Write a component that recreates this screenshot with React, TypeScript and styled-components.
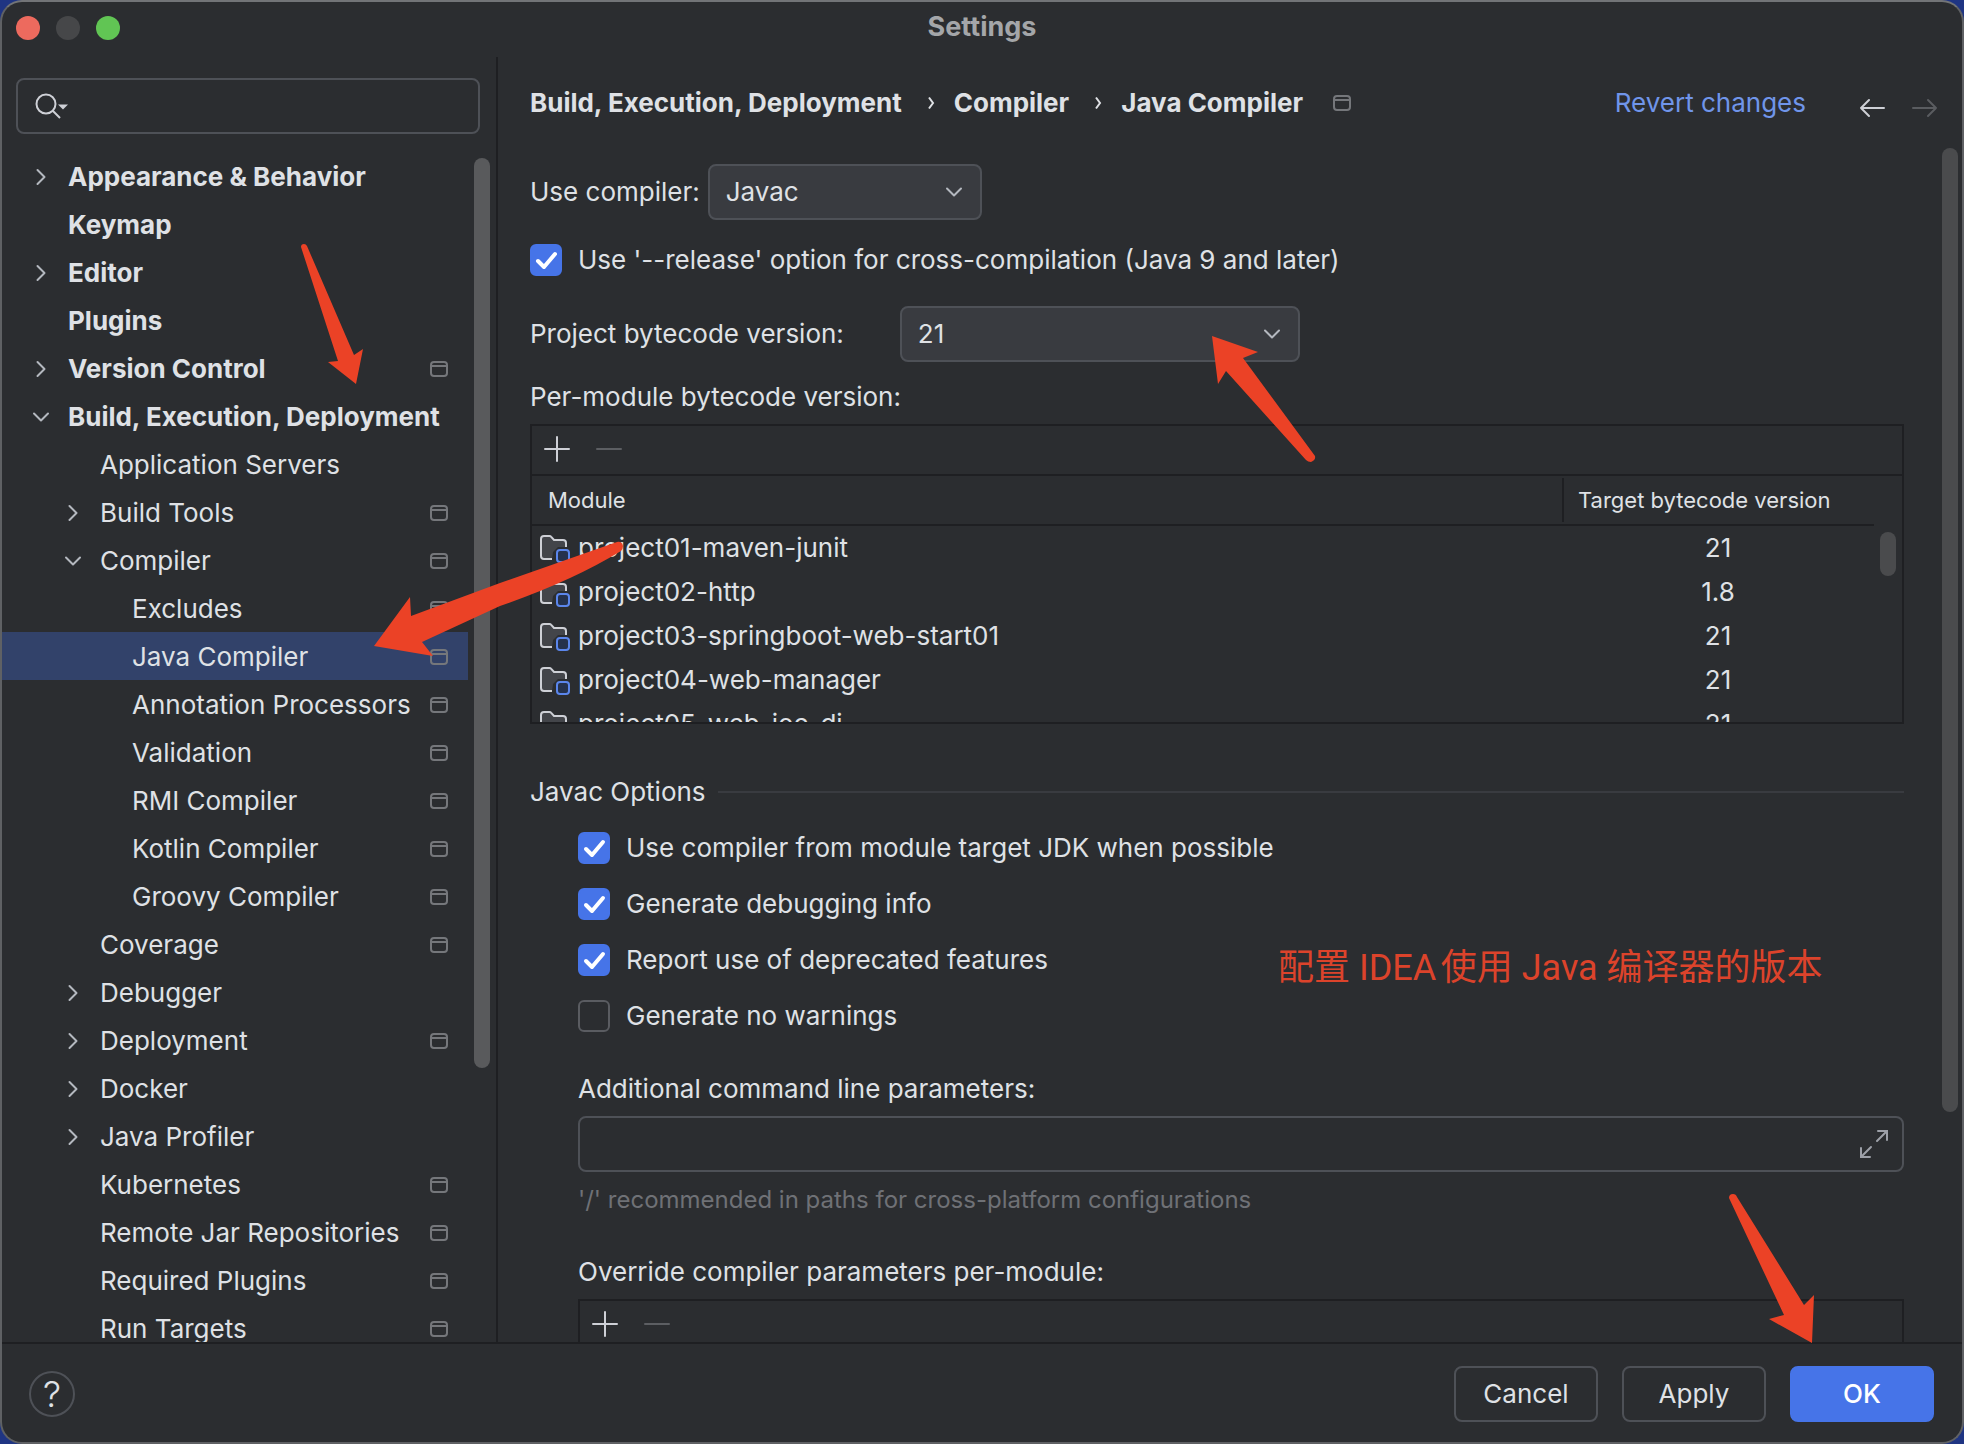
import React, { useState } from "react";
import styled, { createGlobalStyle, css } from "styled-components";

const c = {
  bg: "#2b2d30",
  line: "#1e1f22",
  border: "#4e5157",
  field: "#393b40",
  text: "#dfe1e5",
  muted: "#6f7176",
  accent: "#4674e8",
  selection: "#32426a",
  red: "#eb4226",
};

const GlobalStyle = createGlobalStyle`
  * { box-sizing: border-box; }
  html, body, #root { height: 100%; }
  body {
    margin: 0;
    background: #1f3583;
    color: ${c.text};
    font: 400 26px/32px Inter, "Noto Sans CJK SC", sans-serif;
  }
  button, input, select { font: inherit; color: inherit; }
`;

const Window = styled.div`
  position: relative;
  display: flex;
  flex-direction: column;
  height: 100vh;
  overflow: hidden;
  background: ${c.bg};
  border: 2px solid #5f6164;
  border-top-color: #727477;
  border-radius: 22px;
`;

const TitleBar = styled.header`
  display: grid;
  grid-template-columns: 1fr auto 1fr;
  align-items: center;
  flex: none;
  height: 55px;
  padding: 0 14px 4px;
`;

const Lights = styled.div`
  display: flex;
  gap: 16px;
`;

const Light = styled.button<{ $color: string }>`
  width: 24px;
  height: 24px;
  padding: 0;
  border: 0;
  border-radius: 50%;
  background: ${(p) => p.$color};
`;

const Title = styled.h1`
  margin: 0;
  padding-bottom: 2px;
  font-size: 27px;
  font-weight: 700;
  color: #a4a6a9;
`;

const Body = styled.div`
  display: flex;
  flex: 1;
  min-height: 0;
`;

const Sidebar = styled.nav`
  display: flex;
  flex-direction: column;
  flex: none;
  width: 496px;
  border-right: 2px solid ${c.line};
`;

const Search = styled.label`
  display: flex;
  align-items: center;
  flex: none;
  height: 56px;
  margin: 21px 16px 16px 14px;
  padding: 0 16px;
  border: 2px solid ${c.border};
  border-radius: 8px;
`;

const BareInput = styled.input`
  flex: 1;
  min-width: 0;
  padding: 0;
  border: 0;
  outline: 0;
  background: none;
`;

const TreeArea = styled.div`
  display: flex;
  flex: 1;
  min-height: 0;
  gap: 6px;
`;

const Tree = styled.ul`
  flex: 1;
  min-width: 0;
  margin: 0;
  padding: 2px 0 0;
  overflow: hidden;
  list-style: none;
`;

const TreeRow = styled.li<{ $level: number; $selected?: boolean }>`
  display: flex;
  align-items: center;
  height: 48px;
  padding: 2px 20px 0 ${(p) => 29 + p.$level * 32}px;
  background: ${(p) => (p.$selected ? c.selection : "none")};
  font-weight: ${(p) => (p.$level === 0 ? 700 : 400)};
  white-space: nowrap;
`;

const Twisty = styled.span`
  display: flex;
  flex: none;
  width: 37px;
`;

const TreeLabel = styled.span`
  flex: 1;
`;

const Thumb = styled.div<{ $dim?: boolean; $height: string }>`
  flex: none;
  width: 16px;
  height: ${(p) => p.$height};
  border-radius: 8px;
  background: ${(p) => (p.$dim ? "#4a4b4d" : "#595a5c")};
`;

const SidebarRail = styled.div`
  flex: none;
  width: 22px;
  padding-top: 8px;
`;

const Main = styled.main`
  display: flex;
  flex-direction: column;
  flex: 1;
  min-width: 0;
`;

const Heading = styled.div`
  display: flex;
  align-items: center;
  flex: none;
  height: 91px;
  padding: 0 22px 0 32px;
`;

const Crumbs = styled.ol`
  display: flex;
  align-items: center;
  flex: 1;
  gap: 16px;
  margin: 0;
  padding: 0;
  list-style: none;
  font-weight: 700;
`;

const Crumb = styled.li`
  display: flex;
  align-items: center;
  gap: 20px;
`;

const CrumbScope = styled.li`
  display: flex;
  padding-left: 14px;
`;

const Link = styled.a`
  color: #7095ea;
  text-decoration: none;
`;

const NavButtons = styled.div`
  display: flex;
  gap: 20px;
  padding: 10px 0 0 50px;
`;

const IconButton = styled.button`
  display: flex;
  padding: 0;
  border: 0;
  background: none;
`;

const Scroller = styled.div`
  display: flex;
  flex: 1;
  min-height: 0;
`;

const Content = styled.div`
  flex: 1;
  min-width: 0;
  padding: 16px 38px 0 32px;
  overflow: hidden;
`;

const Field = styled.div<{ $gap: number }>`
  display: flex;
  align-items: center;
  gap: ${(p) => p.$gap}px;
`;

const SelectBox = styled.div<{ $width: number }>`
  display: grid;
  width: ${(p) => p.$width}px;
  height: 56px;
  align-items: center;
  > * { grid-area: 1 / 1; }
  > svg { justify-self: end; margin-right: 18px; pointer-events: none; }
`;

const Select = styled.select`
  appearance: none;
  width: 100%;
  height: 100%;
  padding: 0 16px;
  border: 2px solid ${c.border};
  border-radius: 8px;
  background: ${c.field};
`;

const CheckRow = styled.label`
  display: flex;
  align-items: center;
  gap: 16px;
  height: 56px;
`;

const CheckBox = styled.span`
  display: grid;
  width: 32px;
  height: 32px;
  > * { grid-area: 1 / 1; }
  > svg { pointer-events: none; }
`;

const CheckInput = styled.input`
  appearance: none;
  width: 32px;
  height: 32px;
  margin: 0;
  border: 2px solid #5a5c61;
  border-radius: 6px;
  &:checked { border-color: ${c.accent}; background: ${c.accent}; }
`;

const ReleaseRow = styled.div`
  padding: 12px 0 18px;
`;

const Caption = styled.div<{ $top: number }>`
  display: block;
  padding: ${(p) => p.$top}px 0 11px;
`;

const Panel = styled.section`
  display: flex;
  flex-direction: column;
  height: 300px;
  border: 2px solid ${c.line};
`;

const Toolbar = styled.div`
  display: flex;
  align-items: center;
  flex: none;
  gap: 26px;
  height: 48px;
  padding: 0 0 2px 12px;
`;

const TableArea = styled.div`
  display: flex;
  flex: 1;
  min-height: 0;
  border-top: 2px solid ${c.line};
  overflow: hidden;
`;

const TableClip = styled.div`
  flex: 1;
  min-width: 0;
`;

const Table = styled.table`
  width: 100%;
  border-collapse: separate;
  border-spacing: 0;
  table-layout: fixed;
`;

const Th = styled.th<{ $width?: number }>`
  width: ${(p) => (p.$width ? `${p.$width}px` : "auto")};
  height: 50px;
  padding: 0;
  border-bottom: 2px solid ${c.line};
  font-size: 22px;
  font-weight: 400;
  text-align: left;
`;

const ThInner = styled.div<{ $divided?: boolean }>`
  display: flex;
  align-items: center;
  height: 44px;
  padding-left: ${(p) => (p.$divided ? 14 : 16)}px;
  ${(p) => p.$divided && css`border-left: 2px solid ${c.line};`}
`;

const Td = styled.td<{ $center?: boolean }>`
  height: 44px;
  padding: 0 0 0 ${(p) => (p.$center ? 0 : 6)}px;
  text-align: ${(p) => (p.$center ? "center" : "left")};
`;

const ModuleCell = styled.div`
  display: flex;
  align-items: center;
  gap: 8px;
`;

const TableRail = styled.div`
  flex: none;
  width: 28px;
  padding: 56px 0 0 6px;
`;

const GroupTitle = styled.div`
  display: flex;
  align-items: center;
  gap: 12px;
  padding: 52px 0 12px;
  &::after {
    content: "";
    flex: 1;
    height: 2px;
    background: ${c.field};
  }
`;

const Group = styled.div`
  padding-left: 48px;
`;

const ExpandField = styled.div`
  display: flex;
  align-items: center;
  height: 56px;
  padding: 0 12px 0 16px;
  border: 2px solid ${c.border};
  border-radius: 8px;
`;

const Hint = styled.p`
  margin: 12px 0 0;
  color: ${c.muted};
  font-size: 24px;
`;

const MainRail = styled.div`
  flex: none;
  width: 20px;
`;

const Footer = styled.footer`
  display: flex;
  align-items: center;
  flex: none;
  gap: 24px;
  height: 100px;
  padding: 2px 28px 0 27px;
  border-top: 2px solid ${c.line};
`;

const HelpButton = styled.button`
  width: 46px;
  height: 46px;
  margin-right: auto;
  padding: 0;
  border: 2px solid ${c.border};
  border-radius: 50%;
  background: none;
  font-size: 36px;
  font-weight: 300;
`;

const Button = styled.button<{ $primary?: boolean }>`
  width: 144px;
  height: 56px;
  padding: 0;
  border: 2px solid ${(p) => (p.$primary ? c.accent : c.border)};
  border-radius: 8px;
  background: ${(p) => (p.$primary ? c.accent : "none")};
  color: ${(p) => (p.$primary ? "#ffffff" : c.text)};
  font-weight: ${(p) => (p.$primary ? 500 : 400)};
`;

const Markup = styled.svg`
  position: absolute;
  top: -2px;
  left: -2px;
  pointer-events: none;
`;

const Note = styled.p`
  position: absolute;
  top: 940px;
  left: 1276px;
  margin: 0;
  color: #dc432b;
  font: 400 36px/52px Roboto, "Noto Sans CJK SC", sans-serif;
  text-autospace: normal;
  white-space: nowrap;
`;

const Chevron = ({ open }: { open?: boolean }) => (
  <svg width="20" height="20" viewBox="0 0 20 20" fill="none" stroke="#b4b8bf" strokeWidth="2" strokeLinecap="round" strokeLinejoin="round">
    <path d={open ? "M3 6.500l7 7 7-7" : "M6.500 3l7 7-7 7"} />
  </svg>
);

const ScopeIcon = () => (
  <svg width="18" height="16" viewBox="0 0 18 16" fill="none" stroke="#75777b" strokeWidth="2">
    <rect x="1" y="1" width="16" height="14" rx="3" />
    <path d="M1 5h16" />
  </svg>
);

const SearchIcon = () => (
  <svg width="36" height="28" viewBox="0 0 36 28" fill="none" stroke="#ced0d6" strokeWidth="2">
    <circle cx="12" cy="12" r="9.5" />
    <path d="M19 19l7 7" />
    <path d="M24 12.5h10l-5 5z" fill="#ced0d6" stroke="none" />
  </svg>
);

const PlusIcon = () => (
  <svg width="26" height="26" viewBox="0 0 26 26" stroke="#ced0d6" strokeWidth="2" strokeLinecap="round">
    <path d="M13 1v24M1 13h24" />
  </svg>
);

const MinusIcon = () => (
  <svg width="26" height="26" viewBox="0 0 26 26" stroke="#5c5e62" strokeWidth="2" strokeLinecap="round">
    <path d="M1 13h24" />
  </svg>
);

const Arrow = ({ forward }: { forward?: boolean }) => (
  <svg width="32" height="20" viewBox="0 0 32 20" fill="none" stroke={forward ? "#5a5c60" : "#ced0d6"} strokeWidth="2" strokeLinecap="round" strokeLinejoin="round">
    <path d={forward ? "M5 10h23M20 2l8 8-8 8" : "M28 10H5M13 2L5 10l8 8"} />
  </svg>
);

const ModuleIcon = () => (
  <svg width="32" height="32" viewBox="0 0 32 32" fill="none" strokeWidth="2">
    <path d="M14 27H6a3 3 0 0 1-3-3V7a3 3 0 0 1 3-3h5.500a2 2 0 0 1 1.500.700L16 8h9a3 3 0 0 1 3 3v4h-8l-5 5z" fill="#43454a" />
    <path d="M14 27H6a3 3 0 0 1-3-3V7a3 3 0 0 1 3-3h5.500a2 2 0 0 1 1.500.700L16 8h9a3 3 0 0 1 3 3v4" stroke="#ced0d6" />
    <rect x="19" y="18" width="12" height="12" rx="3" fill="#25324d" stroke="#5b86ec" />
  </svg>
);

const ExpandIcon = () => (
  <svg width="32" height="32" viewBox="0 0 32 32" fill="none" stroke="#9da0a8" strokeWidth="2" strokeLinecap="round">
    <path d="M19 13L29 3M20 3h9v9M13 19L3 29M3 20v9h9" />
  </svg>
);

const Check = ({ label, initial }: { label: string; initial: boolean }) => {
  const [on, setOn] = useState(initial);
  return (
    <CheckRow>
      <CheckBox>
        <CheckInput type="checkbox" checked={on} onChange={() => setOn(!on)} />
        {on && (
          <svg width="32" height="32" viewBox="0 0 32 32" fill="none" stroke="#fff" strokeWidth="4" strokeLinecap="round" strokeLinejoin="round">
            <path d="M8 17l6 6L25 10" />
          </svg>
        )}
      </CheckBox>
      {label}
    </CheckRow>
  );
};

type Node = { label: string; level: number; open?: boolean; leaf?: boolean; scope?: boolean; selected?: boolean };

const nodes: Node[] = [
  { label: "Appearance & Behavior", level: 0 },
  { label: "Keymap", level: 0, leaf: true },
  { label: "Editor", level: 0 },
  { label: "Plugins", level: 0, leaf: true },
  { label: "Version Control", level: 0, scope: true },
  { label: "Build, Execution, Deployment", level: 0, open: true },
  { label: "Application Servers", level: 1, leaf: true },
  { label: "Build Tools", level: 1, scope: true },
  { label: "Compiler", level: 1, open: true, scope: true },
  { label: "Excludes", level: 2, leaf: true, scope: true },
  { label: "Java Compiler", level: 2, leaf: true, scope: true, selected: true },
  { label: "Annotation Processors", level: 2, leaf: true, scope: true },
  { label: "Validation", level: 2, leaf: true, scope: true },
  { label: "RMI Compiler", level: 2, leaf: true, scope: true },
  { label: "Kotlin Compiler", level: 2, leaf: true, scope: true },
  { label: "Groovy Compiler", level: 2, leaf: true, scope: true },
  { label: "Coverage", level: 1, leaf: true, scope: true },
  { label: "Debugger", level: 1 },
  { label: "Deployment", level: 1, scope: true },
  { label: "Docker", level: 1 },
  { label: "Java Profiler", level: 1 },
  { label: "Kubernetes", level: 1, leaf: true, scope: true },
  { label: "Remote Jar Repositories", level: 1, leaf: true, scope: true },
  { label: "Required Plugins", level: 1, leaf: true, scope: true },
  { label: "Run Targets", level: 1, leaf: true, scope: true },
];

const modules = [
  ["project01-maven-junit", "21"],
  ["project02-http", "1.8"],
  ["project03-springboot-web-start01", "21"],
  ["project04-web-manager", "21"],
  ["project05-web-ioc-di", "21"],
];

const CrumbChevron = () => (
  <svg width="16" height="16" viewBox="0 0 16 16" fill="none" stroke={c.text} strokeWidth="2">
    <path d="M7 2.500l4 5.500-4 5.500" />
  </svg>
);

const EditTools = () => (
  <Toolbar>
    <IconButton aria-label="Add"><PlusIcon /></IconButton>
    <IconButton aria-label="Remove" disabled><MinusIcon /></IconButton>
  </Toolbar>
);

export default function App() {
  return (
    <>
      <GlobalStyle />
      <Window>
        <TitleBar>
          <Lights>
            <Light $color="#ed6a5e" aria-label="Close" />
            <Light $color="#464749" aria-label="Minimize" />
            <Light $color="#61c554" aria-label="Zoom" />
          </Lights>
          <Title>Settings</Title>
        </TitleBar>
        <Body>
          <Sidebar>
            <Search>
              <SearchIcon />
              <BareInput type="text" aria-label="Search settings" />
            </Search>
            <TreeArea>
              <Tree>
                {nodes.map((n) => (
                  <TreeRow key={n.label} $level={n.level} $selected={n.selected}>
                    <Twisty>{!n.leaf && <Chevron open={n.open} />}</Twisty>
                    <TreeLabel>{n.label}</TreeLabel>
                    {n.scope && <ScopeIcon />}
                  </TreeRow>
                ))}
              </Tree>
              <SidebarRail>
                <Thumb $height="910px" />
              </SidebarRail>
            </TreeArea>
          </Sidebar>
          <Main>
            <Heading>
              <Crumbs>
                <Crumb>Build, Execution, Deployment <CrumbChevron /></Crumb>
                <Crumb>Compiler <CrumbChevron /></Crumb>
                <Crumb>Java Compiler</Crumb>
                <CrumbScope><ScopeIcon /></CrumbScope>
              </Crumbs>
              <Link href="#revert">Revert changes</Link>
              <NavButtons>
                <IconButton aria-label="Back"><Arrow /></IconButton>
                <IconButton aria-label="Forward" disabled><Arrow forward /></IconButton>
              </NavButtons>
            </Heading>
            <Scroller>
              <Content>
                <Field $gap={8}>
                  <label htmlFor="compiler">Use compiler:</label>
                  <SelectBox $width={274}>
                    <Select id="compiler"><option>Javac</option></Select>
                    <Chevron open />
                  </SelectBox>
                </Field>
                <ReleaseRow>
                  <Check label="Use '--release' option for cross-compilation (Java 9 and later)" initial />
                </ReleaseRow>
                <Field $gap={56}>
                  <label htmlFor="bytecode">Project bytecode version:</label>
                  <SelectBox $width={400}>
                    <Select id="bytecode"><option>21</option></Select>
                    <Chevron open />
                  </SelectBox>
                </Field>
                <Caption $top={19}>Per-module bytecode version:</Caption>
                <Panel>
                  <EditTools />
                  <TableArea>
                    <TableClip>
                      <Table>
                        <thead>
                          <tr>
                            <Th><ThInner>Module</ThInner></Th>
                            <Th $width={312}><ThInner $divided>Target bytecode version</ThInner></Th>
                          </tr>
                        </thead>
                        <tbody>
                          {modules.map(([name, version]) => (
                            <tr key={name}>
                              <Td><ModuleCell><ModuleIcon />{name}</ModuleCell></Td>
                              <Td $center>{version}</Td>
                            </tr>
                          ))}
                        </tbody>
                      </Table>
                    </TableClip>
                    <TableRail><Thumb $dim $height="44px" /></TableRail>
                  </TableArea>
                </Panel>
                <GroupTitle>Javac Options</GroupTitle>
                <Group>
                  <Check label="Use compiler from module target JDK when possible" initial />
                  <Check label="Generate debugging info" initial />
                  <Check label="Report use of deprecated features" initial />
                  <Check label="Generate no warnings" initial={false} />
                  <Caption as="label" htmlFor="params" $top={29}>
                    Additional command line parameters:
                  </Caption>
                  <ExpandField>
                    <BareInput id="params" type="text" />
                    <IconButton aria-label="Expand"><ExpandIcon /></IconButton>
                  </ExpandField>
                  <Hint>'/' recommended in paths for cross-platform configurations</Hint>
                  <Caption $top={40}>Override compiler parameters per-module:</Caption>
                  <Panel>
                    <EditTools />
                  </Panel>
                </Group>
              </Content>
              <MainRail><Thumb $dim $height="964px" /></MainRail>
            </Scroller>
          </Main>
        </Body>
        <Footer>
          <HelpButton aria-label="Help">?</HelpButton>
          <Button>Cancel</Button>
          <Button>Apply</Button>
          <Button $primary>OK</Button>
        </Footer>
        <Note>配置 IDEA使用 Java 编译器的版本</Note>
        <Markup width="1964" height="1444" viewBox="0 0 1964 1444" fill={c.red}>
          <path d="M301 247Q301 244 304 244Q306 244 307 246L354 355L363 349L356 384L328 362L338 361Z" />
          <path d="M617 542Q622 541 623 546Q623 549 621 551Q572 581 500 606L422 642L433 656L374 646L410 597L411 616L500 583Z" />
          <path d="M1212 336L1258 352L1243 358L1315 456Q1316 460 1311 462Q1308 462 1306 460L1226 371L1218 384Z" />
          <path d="M1729 1198Q1729 1194 1733 1194Q1736 1194 1737 1197L1804 1305L1814 1295L1812 1343L1769 1319L1784 1315Z" />
        </Markup>
      </Window>
    </>
  );
}
